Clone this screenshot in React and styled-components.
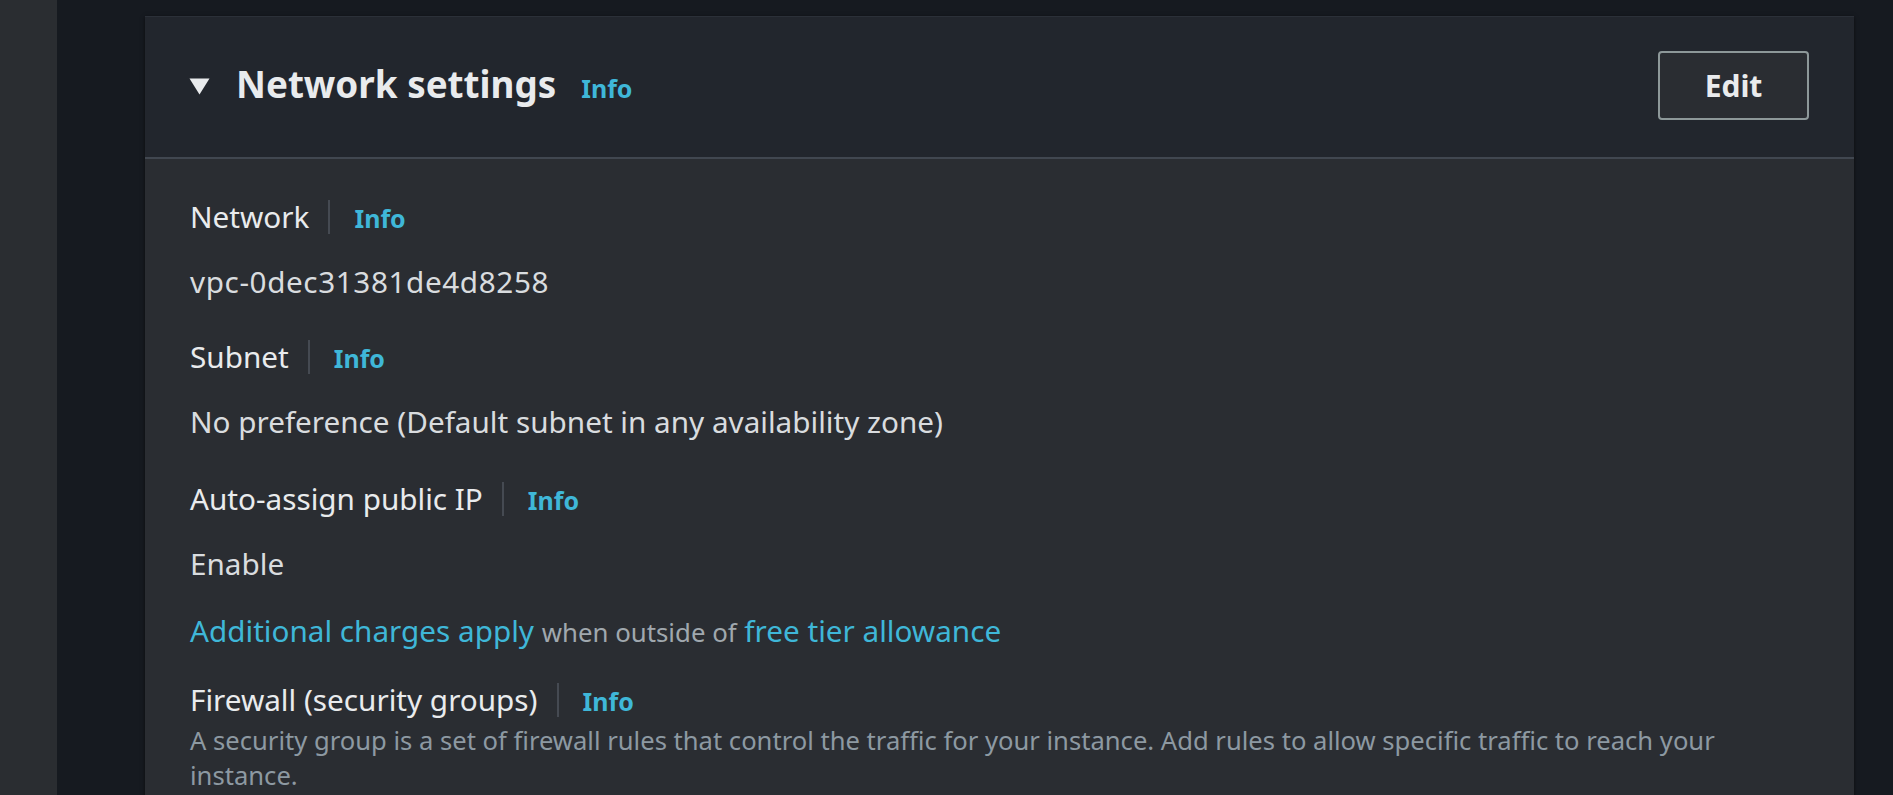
import React from "react";
import styled, { createGlobalStyle } from "styled-components";

const GlobalStyle = createGlobalStyle`
  html, body {
    margin: 0;
    padding: 0;
    overflow: hidden;
    background: #161a20;
    font-family: "Noto Sans", "Open Sans", sans-serif;
  }
  * { box-sizing: border-box; }
`;

const Page = styled.div`
  display: flex;
  min-height: 100vh;
  background: #161a20;
`;

const SideStrip = styled.div`
  width: 57px;
  flex: none;
  background: #2a2d31;
`;

const Main = styled.main`
  flex: 1;
  padding: 16px 39px 0 88px;
`;

const Card = styled.section`
  background: #2a2d32;
  box-shadow: 0 1px 4px rgba(0, 0, 0, 0.55);
  border-top: 1px solid #2b3038;
`;

const Header = styled.header`
  display: flex;
  align-items: flex-start;
  justify-content: space-between;
  height: 142px;
  padding: 34px 45px 0 44px;
  background: #22262d;
  border-bottom: 2px solid #414750;
`;

const TitleGroup = styled.div`
  display: flex;
  align-items: center;
  margin-top: 8px;
`;

const Caret = styled.svg`
  width: 21px;
  height: 17px;
  margin-top: 3px;
  margin-right: 26px;
  flex: none;
`;

const TitleLine = styled.div`
  display: flex;
  align-items: baseline;
  gap: 25px;
`;

const Title = styled.h2`
  margin: 0;
  font-size: 36.8px;
  line-height: 51px;
  font-weight: 700;
  color: #e9ebed;
`;

const InfoLink = styled.a`
  font-size: 25px;
  font-weight: 700;
  color: #3fb7d8;
  text-decoration: none;
  cursor: pointer;
`;

const EditButton = styled.button`
  width: 151px;
  height: 69px;
  border: 2px solid #8d9899;
  border-radius: 4px;
  background: #2a2d32;
  color: #e9ebed;
  font-family: inherit;
  font-size: 30px;
  font-weight: 700;
  cursor: pointer;
`;

const Body = styled.div`
  padding: 36px 45px 80px 45px;
  display: flex;
  flex-direction: column;
`;

const Field = styled.div`
  display: flex;
  flex-direction: column;
  margin-top: ${(p) => p.$top || 0}px;
`;

const LabelRow = styled.div`
  display: flex;
  align-items: baseline;
  height: 43px;
`;

const Label = styled.span`
  font-size: 29.7px;
  line-height: 43px;
  color: #e9ebed;
`;

const Divider = styled.span`
  align-self: center;
  width: 2px;
  height: 34px;
  background: #454a52;
  margin: 0 24px 0 19px;
`;

const Value = styled.div`
  margin-top: 22px;
  font-size: 29.7px;
  line-height: 43px;
  color: #d9dcdf;
  letter-spacing: ${(p) => p.$spacing || "normal"};
`;

const Constraint = styled.div`
  margin-top: 24px;
  font-size: 29.7px;
  line-height: 43px;
  color: #3fb7d8;
`;

const TextLink = styled.a`
  color: #3fb7d8;
  text-decoration: none;
`;

const Muted = styled.span`
  font-size: 25.8px;
  color: #a0a8ae;
`;

const Description = styled.p`
  margin: 2px 0 0;
  font-size: 25.6px;
  line-height: 35px;
  color: #8d99a2;
  max-width: 1560px;
`;

function FieldLabel({ children }) {
  return (
    <LabelRow>
      <Label>{children}</Label>
      <Divider />
      <InfoLink>Info</InfoLink>
    </LabelRow>
  );
}

export default function App() {
  return (
    <>
      <GlobalStyle />
      <Page>
        <SideStrip />
        <Main>
          <Card>
            <Header>
              <TitleGroup>
                <Caret viewBox="0 0 21 17">
                  <path d="M0.5 0.5 L20.5 0.5 L10.5 16.5 Z" fill="#e9ebed" />
                </Caret>
                <TitleLine>
                  <Title>Network settings</Title>
                  <InfoLink>Info</InfoLink>
                </TitleLine>
              </TitleGroup>
              <EditButton>Edit</EditButton>
            </Header>
            <Body>
              <Field>
                <FieldLabel>Network</FieldLabel>
                <Value $spacing="0.6px">vpc-0dec31381de4d8258</Value>
              </Field>
              <Field $top={32}>
                <FieldLabel>Subnet</FieldLabel>
                <Value>No preference (Default subnet in any availability zone)</Value>
              </Field>
              <Field $top={34}>
                <FieldLabel>Auto-assign public IP</FieldLabel>
                <Value>Enable</Value>
                <Constraint>
                  <TextLink>Additional charges apply</TextLink>{" "}
                  <Muted>when outside of</Muted>{" "}
                  <TextLink>free tier allowance</TextLink>
                </Constraint>
              </Field>
              <Field $top={24}>
                <FieldLabel>Firewall (security groups)</FieldLabel>
                <Description>
                  A security group is a set of firewall rules that control the traffic for your
                  instance. Add rules to allow specific traffic to reach your instance.
                </Description>
              </Field>
            </Body>
          </Card>
        </Main>
      </Page>
    </>
  );
}
